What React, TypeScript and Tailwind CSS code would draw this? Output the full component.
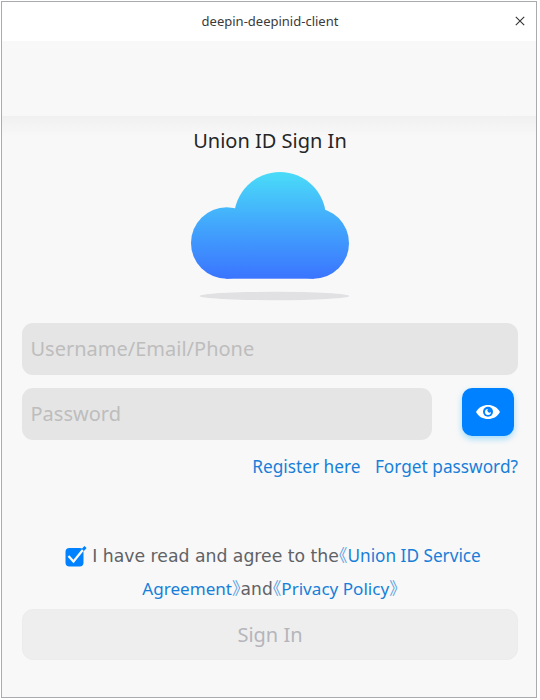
import { useState } from "react";

function Cloud() {
  return (
    <svg width="160" height="132" viewBox="190 170 160 132" className="block" aria-hidden="true">
      <defs>
        <linearGradient id="sky" x1="0" y1="172" x2="0" y2="279" gradientUnits="userSpaceOnUse">
          <stop offset="0" stopColor="#4adcf8" />
          <stop offset="0.5" stopColor="#42a6fc" />
          <stop offset="1" stopColor="#3a74ff" />
        </linearGradient>
      </defs>
      <g fill="url(#sky)">
        <circle cx="226.700" cy="243" r="35.700" />
        <circle cx="313.500" cy="243.200" r="35.500" />
        <circle cx="280" cy="218" r="46" />
        <rect x="226" y="218" width="88" height="60.700" />
      </g>
      <ellipse cx="274.500" cy="296" rx="75" ry="4.200" fill="#e1e1e4" />
    </svg>
  );
}

function Eye() {
  return (
    <svg width="24" height="16" viewBox="0 0 24 16" aria-hidden="true">
      <path d="M0 8 C3 3 7 1 12 1 S21 3 24 8 C21 13 17 15 12 15 S3 13 0 8Z" fill="#fff" />
      <circle cx="12" cy="7.800" r="5" fill="#0081ff" />
      <path d="M12 4.900 A3 3 0 1 0 15 7.900 A2 2 0 0 1 12 4.900Z" fill="#fff" />
    </svg>
  );
}

function AgreeBox() {
  return (
    <svg width="22" height="22" viewBox="0 0 22 22" className="block" aria-hidden="true">
      <rect x="0.500" y="3" width="18" height="18.500" rx="4" fill="#0081ff" />
      <path d="M3.500 11 L8.500 16.500 L19 3.500" fill="none" stroke="#f8f8f8" strokeWidth="2.300" />
      <path d="M17.800 5 L20.500 2" stroke="#0081ff" strokeWidth="3" />
    </svg>
  );
}

const link = "text-[#177fd8]";
const bracket = "font-['Noto_Sans_CJK_SC',sans-serif] [font-feature-settings:'halt'] opacity-70";
const field =
  "h-[52px] rounded-[11px] bg-[#e5e5e5] px-[8.5px] pb-[2px] text-[20px] text-[#555] outline-none placeholder:text-[#bdbdbd] placeholder:opacity-100";

export default function App() {
  const [visible, setVisible] = useState(false);
  return (
    <div className="h-[700px] w-[540px] overflow-hidden bg-white pl-px pt-px font-['Noto_Sans',sans-serif]">
      <main className="flex h-[697px] w-[536px] flex-col border border-[#a9abae] bg-[#f8f8f8]">
        <header className="grid h-[39px] shrink-0 grid-cols-[34px_1fr_32px] items-center bg-white">
          <span />
          <h1 className="pb-[2px] text-center text-[13px] leading-[20px] text-[#3a3a3a]">deepin-deepinid-client</h1>
          <button className="flex justify-center pb-px" aria-label="Close">
            <svg width="10" height="10" viewBox="0 0 10 10">
              <path d="M0.800 0.800 L9.200 9.200 M9.200 0.800 L0.800 9.200" stroke="#333" strokeWidth="1.100" />
            </svg>
          </button>
        </header>
        <div className="h-[75px] shrink-0" />
        <section className="flex flex-1 flex-col bg-[linear-gradient(#f0f0f0,#f8f8f8_20px)] pl-[20px] pr-[18px]">
          <h2 className="mt-[11px] text-center text-[20px] leading-[28px] text-[#262626]">Union ID Sign In</h2>
          <div className="mt-[15px] flex h-[132px] justify-center">
            <Cloud />
          </div>
          <input className={`mt-[21px] ${field}`} placeholder="Username/Email/Phone" />
          <div className="mt-[13px] flex justify-between pr-[4px]">
            <input className={`w-[410px] ${field}`} type={visible ? "text" : "password"} placeholder="Password" />
            <button
              className="flex h-[48px] w-[52px] items-center justify-center rounded-[10px] bg-[#0081ff] shadow-[0_3px_6px_rgba(0,170,255,0.35)]"
              aria-label="Show password"
              onClick={() => setVisible(!visible)}
            >
              <Eye />
            </button>
          </div>
          <nav className={`mt-[15px] flex justify-end gap-[14.5px] text-[17.25px] leading-[24px] ${link}`}>
            <a>Register here</a>
            <a>Forget password?</a>
          </nav>
          <div className="mt-[60px] flex h-[33px] items-center justify-center gap-[5px] whitespace-nowrap text-[17.2px] leading-[33px]">
            <AgreeBox />
            <p className="mr-[-6px]">
              <span className="font-['DejaVu_Sans',sans-serif] text-[17.25px] text-[#606266]">I have read and agree to the</span>
              <span className={link}><span className={bracket}>《</span>Union ID Service</span>
            </p>
          </div>
          <p className="mt-[-1px] h-[33px] whitespace-nowrap text-center text-[17.1px] leading-[33px]">
            <span className={link}>Agreement<span className={bracket}>》</span></span>
            <span className="font-['DejaVu_Sans',sans-serif] text-[#606266]">and</span>
            <span className={link}><span className={bracket}>《</span>Privacy Policy<span className={bracket}>》</span></span>
          </p>
          <button className="mt-[5px] h-[51px] rounded-[11px] border border-[#ececec] bg-[#eeeeee] text-[20px] text-[#b5b5bb]">
            Sign In
          </button>
        </section>
      </main>
    </div>
  );
}
